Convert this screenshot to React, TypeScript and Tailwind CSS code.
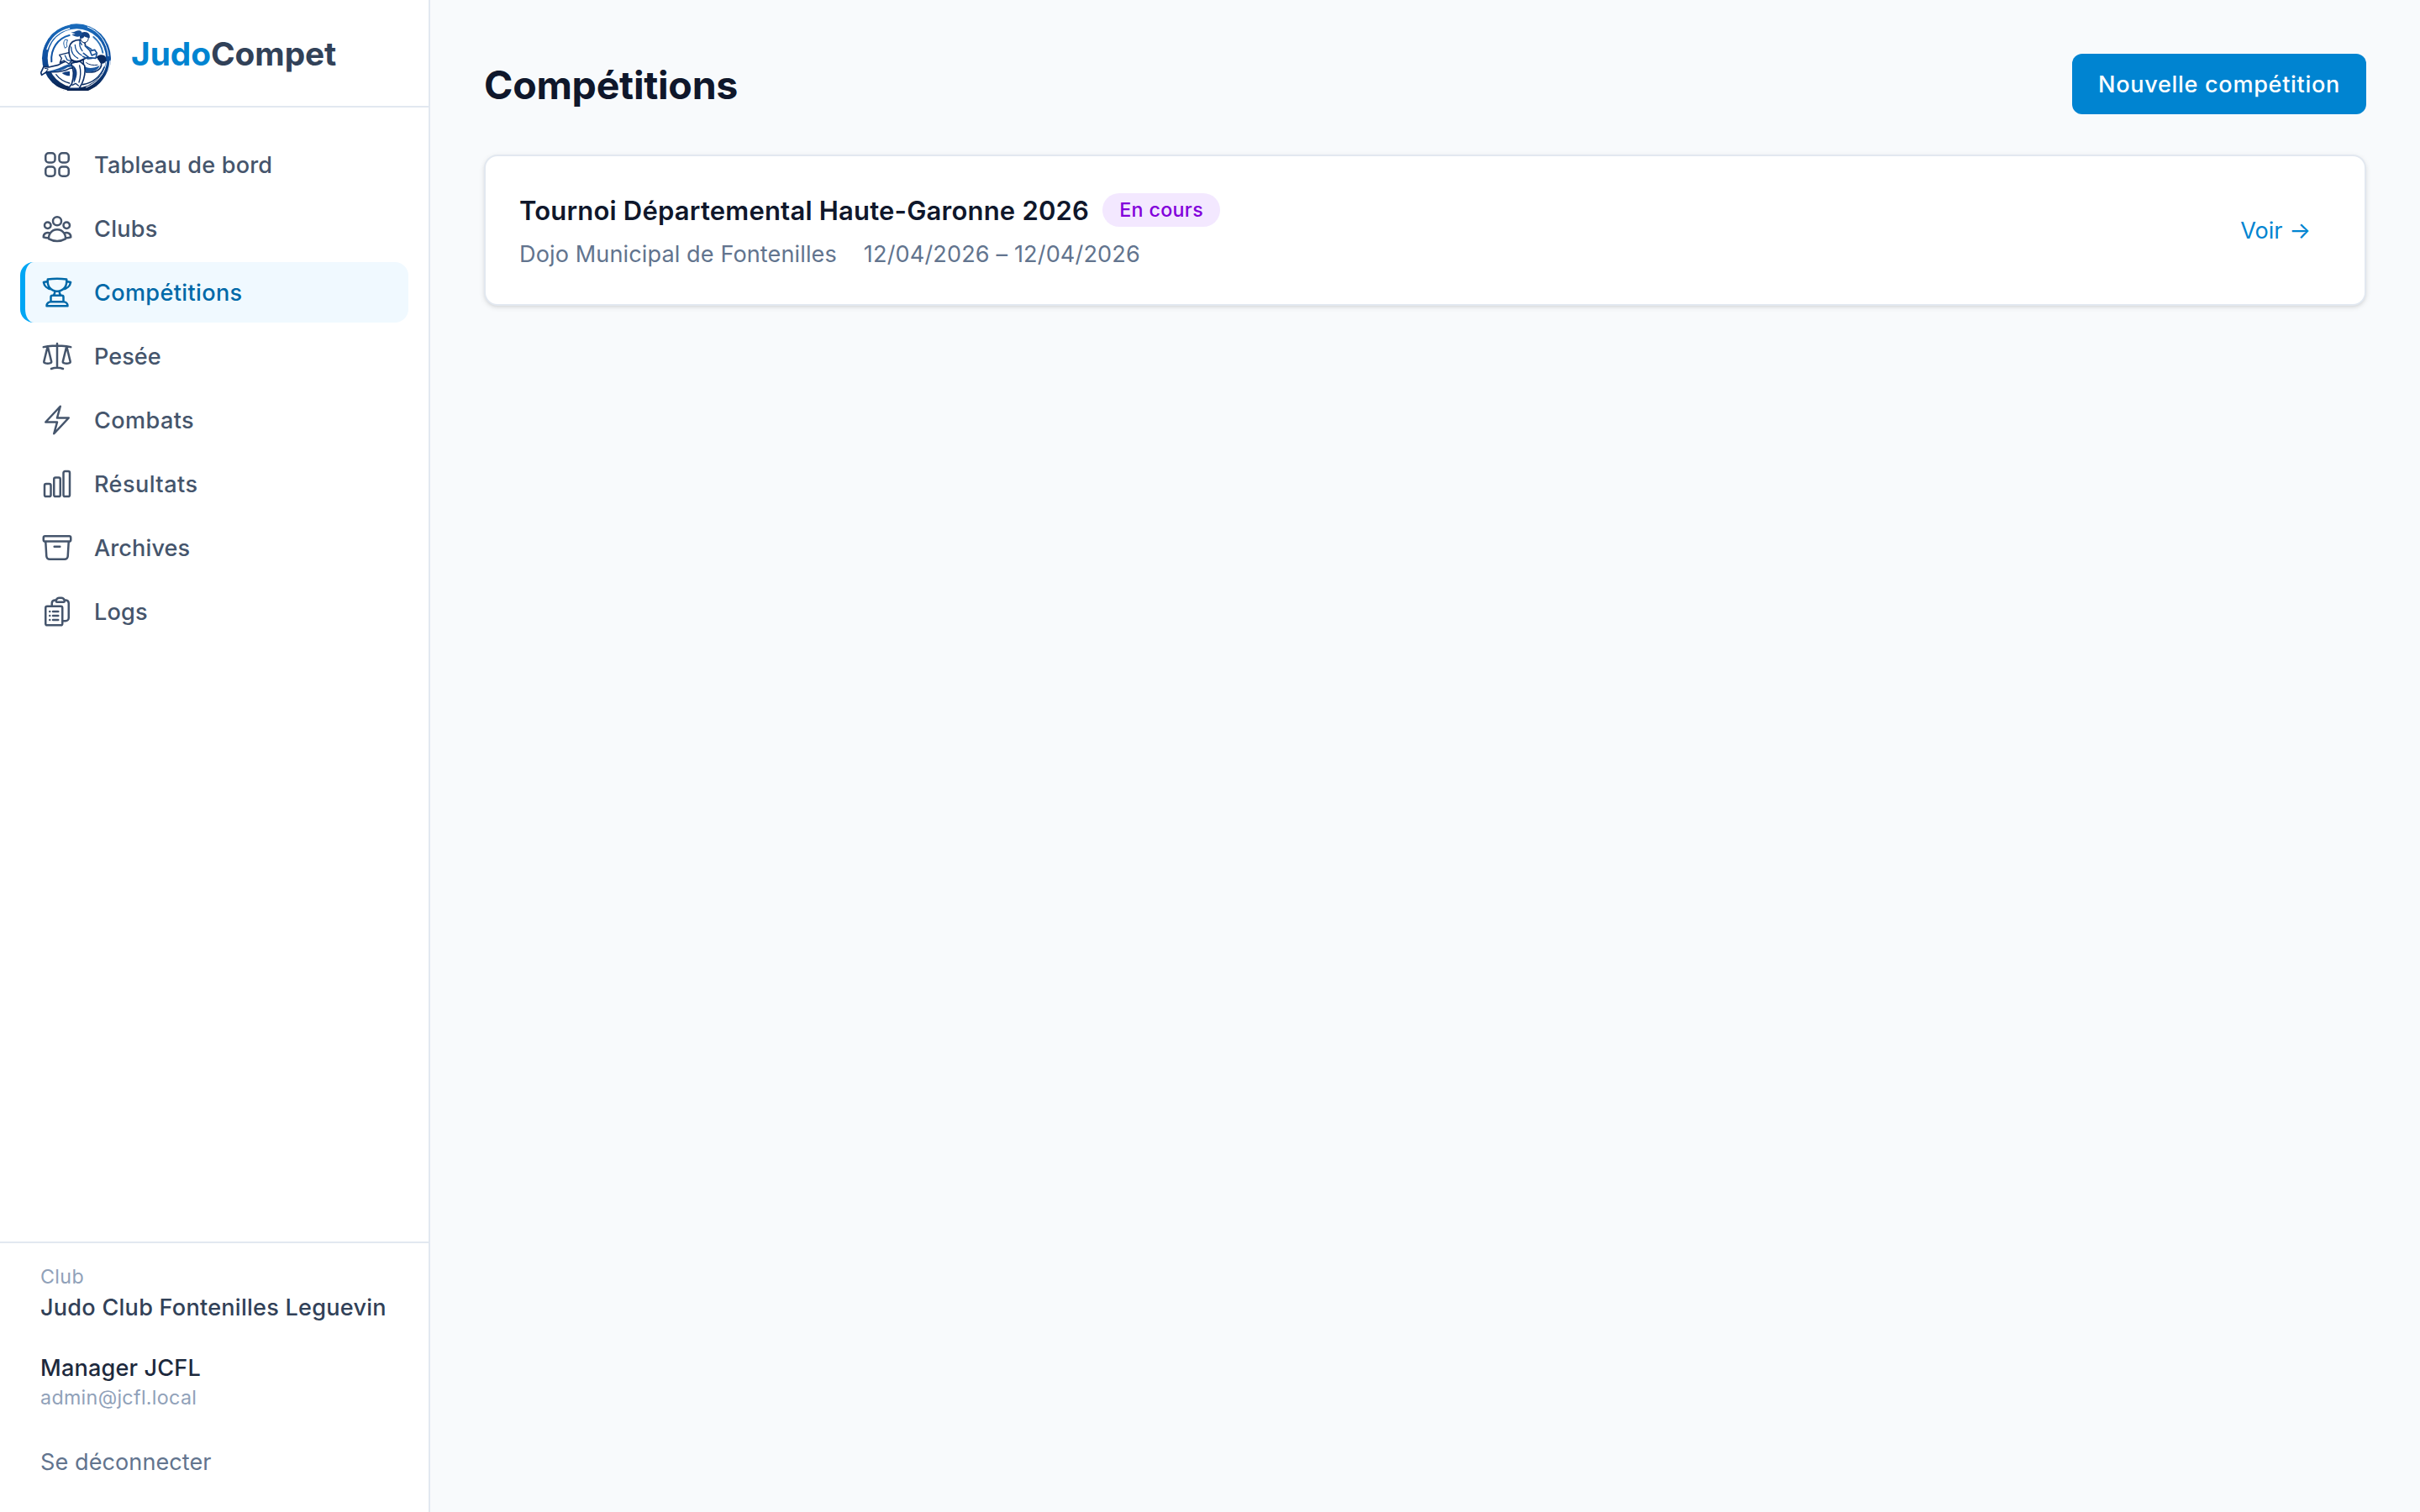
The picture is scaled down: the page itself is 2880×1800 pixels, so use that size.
import React from 'react'
import type { IconType } from 'react-icons'
import {
  HiOutlineSquares2X2,
  HiOutlineUserGroup,
  HiOutlineTrophy,
  HiOutlineScale,
  HiOutlineBolt,
  HiOutlineChartBar,
  HiOutlineArchiveBox,
  HiOutlineClipboardDocumentList,
} from 'react-icons/hi2'

type NavItem = { label: string; icon: IconType; tracking: string; active?: boolean }

const NAV: NavItem[] = [
  { label: 'Tableau de bord', icon: HiOutlineSquares2X2, tracking: 'tracking-[0.19px]' },
  { label: 'Clubs', icon: HiOutlineUserGroup, tracking: 'tracking-[0.27px]' },
  { label: 'Compétitions', icon: HiOutlineTrophy, tracking: 'tracking-[0.35px]', active: true },
  { label: 'Pesée', icon: HiOutlineScale, tracking: 'tracking-normal' },
  { label: 'Combats', icon: HiOutlineBolt, tracking: 'tracking-[0.4px]' },
  { label: 'Résultats', icon: HiOutlineChartBar, tracking: 'tracking-[0.43px]' },
  { label: 'Archives', icon: HiOutlineArchiveBox, tracking: 'tracking-[0.1px]' },
  { label: 'Logs', icon: HiOutlineClipboardDocumentList, tracking: 'tracking-[0.15px]' },
]

/** Round club emblem: two judokas in front of a brushed blue ring. */
function Logo() {
  return (
    <svg viewBox="36 36 252 240" className="h-20 w-[84px] shrink-0" fill="none" strokeLinecap="round" strokeLinejoin="round">
      <defs>
        <linearGradient id="ring" x1="165" y1="36" x2="165" y2="276" gradientUnits="userSpaceOnUse">
          <stop offset="0" stopColor="#1a6cbc" />
          <stop offset="0.5" stopColor="#0f4fa0" />
          <stop offset="1" stopColor="#0a2350" />
        </linearGradient>
      </defs>
      {/* ring */}
      <circle cx="165" cy="160" r="123" fill="url(#ring)" />
      <ellipse cx="166" cy="160" rx="104" ry="105" fill="#fff" />
      <path d="M48 118C62 78 98 47 142 39" stroke="#fff" strokeWidth="3" />
      <path d="M60 128C72 92 100 64 140 54" stroke="#fff" strokeWidth="4" />
      <path d="M205 48c42 16 70 56 74 104" stroke="#fff" strokeWidth="3" />
      <path d="M285 170c-2 46-34 92-76 108" stroke="#fff" strokeWidth="4" />
      <path d="M272 172c-4 42-32 76-72 92" stroke="#fff" strokeWidth="3" />
      <path d="M50 214c16 32 44 54 80 62" stroke="#fff" strokeWidth="4" />
      <path d="M76 172c-4-44 22-84 64-94" stroke="url(#ring)" strokeWidth="6" />
      <path d="M226 84c18 15 29 33 33 56" stroke="#2f74b8" strokeWidth="6" />
      <path d="M74 222c14 24 36 36 64 41" stroke="url(#ring)" strokeWidth="4" />
      <path d="M92 218c12 16 28 26 48 31" stroke="url(#ring)" strokeWidth="4" />
      <path d="M188 254c34-6 62-28 76-62" stroke="url(#ring)" strokeWidth="5" />
      <path d="M124 94c-8 10-4 18 0 30l8-6c-5-7-1-14 1-22z" stroke="#1c5da5" strokeWidth="3" />
      <path d="M113 213c8-5 20-7 28-6v16c-10 0-20-3-28-10z" fill="#123f82" />

      {/* opponent */}
      <path d="M190 160c20-4 36-4 50-4l14 22c2 14-8 26-24 30-12 3-20 2-30 2-8-12-12-30-10-50z" fill="#fff" stroke="#0d2f68" strokeWidth="5" />
      <path d="M190 186c14 12 34 12 58 0-4 12-14 18-26 22l-22 2c-6-8-8-14-10-24z" fill="#1b57a0" />
      <path d="M200 176c10 8 24 10 40 8" stroke="#0d2f68" strokeWidth="3" />
      <path d="M240 152c14-8 28-4 31 8 2 14-8 22-19 18-4-3-4-6-5-10-6-2-9-8-7-16z" fill="#0b2a60" />

      {/* swept leg */}
      <path d="M156 168c-24-2-40 6-56 16l-34 8-18-2-10 22 3 8 18-12c28 2 60 2 82-12l20-2z" fill="#fff" stroke="#0d2f68" strokeWidth="5" />
      <path d="M64 208c28 0 50-2 70-16l18-2-4-10c-16 0-32 10-46 16-12 5-24 6-38 12z" fill="#1b57a0" />
      <path d="M52 196l12 2-12 16" stroke="#0d2f68" strokeWidth="3" />
      <path d="M104 148l34-8 14 26-14 14-18-12-14 8 6-16z" fill="#fff" stroke="#0d2f68" strokeWidth="4" />
      <path d="M124 150l8 16 14 4" stroke="#174f96" strokeWidth="4" />

      {/* standing leg */}
      <path d="M146 178c12 26 10 50 2 74l-12 16h38l10-16c10-22 14-42 10-66l-18-16z" fill="#fff" stroke="#0d2f68" strokeWidth="5" />
      <path d="M150 184c20 12 22 36 6 64-2-8-2-14-1-24 3-16 0-28-5-40z" fill="#123f82" />
      <path d="M176 186c6 22 4 40-2 60M150 256l12-6 10 8" stroke="#0d2f68" strokeWidth="4" />

      {/* jacket */}
      <path d="M178 94c-22 0-36 10-39 28-3 16 2 34 8 46 14 8 30 6 42-4l18-8c-6-8-7-16-6-24l-6-26z" fill="#fff" stroke="#0d2f68" strokeWidth="5" />
      <path d="M146 120c0 18 8 32 24 40M160 112c0 14 8 30 24 38M178 98c-4 14 0 26 8 36M184 112l-8-14" stroke="#174f96" strokeWidth="4" />
      <path d="M148 166c12 8 28 6 42-2" stroke="#0b2a60" strokeWidth="6" />
      <path d="M196 116l18 18 16-4 8 12-4 18-24-2-20-16" fill="#fff" stroke="#174f96" strokeWidth="5" />
      <path d="M202 118l16 10M214 136l6 14 14-6M188 154l18 8 14-2" stroke="#174f96" strokeWidth="5" />

      {/* head and ponytail */}
      <path d="M180 82c-3 12 4 22 14 22 10-1 14-8 14-20l-6-8z" fill="#fff" stroke="#0d2f68" strokeWidth="3" />
      <path d="M178 88c-4-12 4-22 16-22 13 0 21 9 18 22-8-1-15-3-19-6-2 6-8 10-15 6z" fill="#123f82" />
      <path d="M186 74c-10 13-24 11-38 1 6 0 10-1 13-3-6 0-12-2-15-5 14 2 18-8 30-6 6 1 9 6 10 13z" fill="#174f96" />
    </svg>
  )
}

function Sidebar() {
  return (
    <aside className="flex w-[512px] shrink-0 flex-col border-r-2 border-slate-200 bg-white">
      <div className="flex h-32 items-center gap-6 border-b-2 border-slate-200 px-12 pt-[10px]">
        <Logo />
        <span className="-mt-2 text-[38.8px] leading-[56px] font-bold tracking-[-0.05px]">
          <span className="text-[#0084d1]">Judo</span>
          <span className="text-slate-700">Compet</span>
        </span>
      </div>

      <nav className="flex flex-1 flex-col gap-1 px-6 py-8">
        {NAV.map(({ label, icon: Icon, tracking, active }) => (
          <a
            key={label}
            className={
              active
                ? 'flex h-[72px] items-center gap-6 rounded-2xl border-l-[6px] border-[#00a6f4] bg-[#f0f9ff] pl-[18px] text-[#0069a8]'
                : 'flex h-[72px] items-center gap-6 rounded-2xl pl-6 text-slate-600'
            }
          >
            <Icon className="size-10 shrink-0" />
            <span className={`pt-px text-[27.1px] leading-10 font-medium ${tracking}`}>{label}</span>
          </a>
        ))}
      </nav>

      <div className="flex flex-col border-t-2 border-slate-200 px-12 pt-6 pb-10 whitespace-nowrap">
        <p className="text-[23.25px] leading-8 tracking-[0.35px] text-slate-400">Club</p>
        <p className="-mb-px text-[27.1px] leading-[41px] font-medium tracking-[0.24px] text-slate-700">Judo Club Fontenilles Leguevin</p>
        <p className="mt-8 -mb-px text-[27.1px] leading-[41px] font-medium tracking-[0.16px] text-slate-800">Manager JCFL</p>
        <p className="text-[23.25px] leading-8 tracking-[0.32px] text-slate-400">admin@jcfl.local</p>
        <button className="mt-10 -mb-px text-left text-[27.1px] leading-[41px] tracking-[0.06px] text-slate-500">Se déconnecter</button>
      </div>
    </aside>
  )
}

export default function App() {
  return (
    <div className="flex h-[1800px] w-[2880px] overflow-hidden bg-slate-50 font-[Inter,sans-serif] antialiased">
      <Sidebar />
      <main className="flex min-w-0 flex-1 flex-col gap-12 p-16">
        <header className="flex h-[72px] items-center justify-between">
          <h1 className="pt-[2px] text-[46.5px] leading-[64px] font-bold tracking-[-0.25px] text-slate-900">Compétitions</h1>
          <button className="h-[72px] w-[350px] rounded-xl bg-[#0084d1] pt-px text-[27.1px] leading-10 font-medium tracking-[0.68px] text-white">
            Nouvelle compétition
          </button>
        </header>

        <section className="flex h-[180px] items-center justify-between rounded-2xl border-2 border-slate-200 bg-white px-10 shadow-[0_2px_6px_0_rgba(0,0,0,0.1),0_2px_4px_-2px_rgba(0,0,0,0.1)]">
          <div className="flex flex-col gap-2">
            <div className="flex h-12 items-center gap-4">
              <h2 className="pt-px text-[31px] leading-[48px] font-semibold tracking-[0.2px] text-slate-900">
                Tournoi Départemental Haute-Garonne 2026
              </h2>
              <span className="flex h-10 w-[140px] items-center justify-center rounded-full bg-[#f3e8ff] text-[23.25px] leading-8 font-medium tracking-[0.34px] text-[#8200db]">
                En cours
              </span>
            </div>
            <div className="-mb-px flex gap-8 text-[27.1px] leading-[41px] text-slate-500">
              <span className="tracking-[0.1px]">Dojo Municipal de Fontenilles</span>
              <span className="tracking-[0.13px]">12/04/2026 – 12/04/2026</span>
            </div>
          </div>
          <a className="pt-px pr-6 text-[27.1px] leading-10 text-[#0084d1]">Voir →</a>
        </section>
      </main>
    </div>
  )
}
